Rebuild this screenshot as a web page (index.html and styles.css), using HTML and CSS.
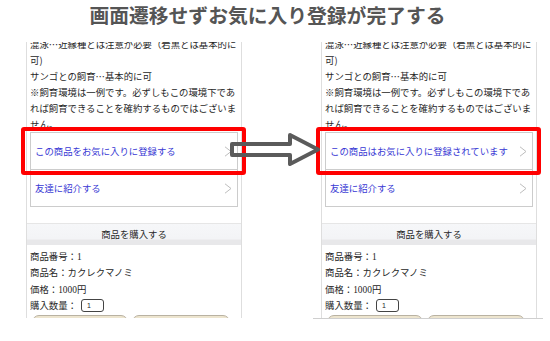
FILE: index.html
```html
<!DOCTYPE html>
<html lang="ja">
<head>
<meta charset="utf-8">
<link rel="stylesheet" href="styles.css">
</head>
<body>
<h1 class="title">画面遷移せずお気に入り登録が完了する</h1>
<div class="stage">
  <div class="frame frame-a">
    <div class="panel">
      <div class="desc"><p>混泳…近縁種とは注意が必要（岩黒とは基本的に<br>可)<br>サンゴとの飼育…基本的に可<br>※飼育環境は一例です。必ずしもこの環境下であ<br>れば飼育できることを確約するものではございま<br>せん。</p></div>
      <ul class="menu">
        <li class="item">
          <span>この商品をお気に入りに登録する</span>
          <svg class="chev" viewBox="0 0 8 11" width="8" height="11"><polyline points="1,0.8 7,5.5 1,10.2" fill="none" stroke="#bdbdbd" stroke-width="1"/></svg>
          <div class="highlight"></div>
        </li>
        <li class="item">
          <span>友達に紹介する</span>
          <svg class="chev" viewBox="0 0 8 11" width="8" height="11"><polyline points="1,0.8 7,5.5 1,10.2" fill="none" stroke="#bdbdbd" stroke-width="1"/></svg>
        </li>
      </ul>
      <div class="buy-head">商品を購入する</div>
      <div class="info">
        <div>商品番号：1</div>
        <div>商品名：カクレクマノミ</div>
        <div>価格：1000円</div>
        <div>購入数量：<span class="qty">1</span></div>
      </div>
      <div class="buttons"><span class="btn b1"></span><span class="btn b2"></span></div>
    </div>
  </div>
  <div class="frame frame-b">
    <div class="panel">
      <div class="desc"><p>混泳…近縁種とは注意が必要（岩黒とは基本的に<br>可)<br>サンゴとの飼育…基本的に可<br>※飼育環境は一例です。必ずしもこの環境下であ<br>れば飼育できることを確約するものではございま<br>せん。</p></div>
      <ul class="menu">
        <li class="item">
          <span>この商品はお気に入りに登録されています</span>
          <svg class="chev" viewBox="0 0 8 11" width="8" height="11"><polyline points="1,0.8 7,5.5 1,10.2" fill="none" stroke="#bdbdbd" stroke-width="1"/></svg>
          <div class="highlight"></div>
        </li>
        <li class="item">
          <span>友達に紹介する</span>
          <svg class="chev" viewBox="0 0 8 11" width="8" height="11"><polyline points="1,0.8 7,5.5 1,10.2" fill="none" stroke="#bdbdbd" stroke-width="1"/></svg>
        </li>
      </ul>
      <div class="buy-head">商品を購入する</div>
      <div class="info">
        <div>商品番号：1</div>
        <div>商品名：カクレクマノミ</div>
        <div>価格：1000円</div>
        <div>購入数量：<span class="qty">1</span></div>
      </div>
      <div class="buttons"><span class="btn b1"></span><span class="btn b2"></span></div>
    </div>
  </div>
  <svg class="arrow" viewBox="0 0 96 40" width="96" height="40">
    <path d="M4,14 L62,14 L62,5 L90,19.5 L62,34 L62,25 L4,25 Z" fill="none" stroke="#5b5b5b" stroke-width="4" stroke-linejoin="round"/>
  </svg>
</div>
</body>
</html>
```

FILE: styles.css
```css
* { box-sizing: border-box; }
html, body { margin: 0; padding: 0; background: #fff; }
body {
  width: 550px;
  height: 341px;
  overflow: hidden;
  font-family: "Noto Sans CJK JP", "Noto Sans", sans-serif;
}
.title {
  margin: 0;
  height: 42px;
  padding: 4px 15px 0 0;
  font-size: 19.8px;
  line-height: 22px;
  font-weight: 700;
  color: #555;
  text-align: center;
}
.stage {
  position: relative;
  display: flex;
  align-items: flex-start;
  padding-left: 26px;
}
.frame-b {
  margin-left: 71px;
  padding: 0 6px 0 8px;
  border-bottom: 1px solid #cfcfcf;
}
.panel {
  width: 216px;
  border-left: 1px solid #dedede;
  border-right: 1px solid #dedede;
  background: #fff;
  color: #262626;
  font-size: 9.4px;
}
.desc {
  height: 90px;
  overflow: hidden;
}
.desc p {
  margin: -6.5px 0 0;
  padding-left: 3px;
  line-height: 16px;
  white-space: nowrap;
}
.menu {
  list-style: none;
  margin: 0 3px;
  padding: 0;
  border: 1px solid #cccccc;
}
.item {
  position: relative;
  height: 37px;
  display: flex;
  align-items: center;
  justify-content: space-between;
  padding: 0 5px 0 4px;
  color: #3838d4;
  white-space: nowrap;
}
.item + .item { border-top: 1px solid #cccccc; }
.item:first-child { height: 36px; }
.chev { display: block; }
.highlight {
  position: absolute;
  top: -6px;
  left: -10px;
  right: -9px;
  bottom: -6px;
  border: 4px solid #f00;
  border-radius: 3px;
}
.buy-head {
  margin-top: 16px;
  height: 22px;
  border-top: 1px solid #e6e6e6;
  background: linear-gradient(#f6f7f9 0, #f3f4f6 70%, #e8e8ea 78%, #e8e8ea 100%);
  text-align: center;
  line-height: 20px;
  color: #262626;
}
.info {
  padding: 4px 3px 0;
  line-height: 16.3px;
  font-family: "Liberation Serif", "Noto Sans CJK JP", serif;
  white-space: nowrap;
}
.qty {
  display: inline-block;
  vertical-align: middle;
  margin-left: 4px;
  width: 23px;
  height: 13px;
  border: 1px solid #444;
  border-radius: 3px;
  padding-left: 5px;
  font-family: "Liberation Sans", sans-serif;
  font-size: 7px;
  line-height: 11px;
  position: relative;
  top: -1px;
}
.buttons {
  display: flex;
  gap: 4px;
  height: 3px;
  margin-top: 1px;
  padding-left: 5px;
  overflow: hidden;
}
.btn {
  display: block;
  height: 20px;
  background: #ede5cf;
  border: 1px solid #b9b2a2;
  border-radius: 7px;
}
.b1 { width: 96px; }
.b2 { width: 98px; }
.arrow {
  position: absolute;
  left: 228px;
  top: 88px;
}
```
